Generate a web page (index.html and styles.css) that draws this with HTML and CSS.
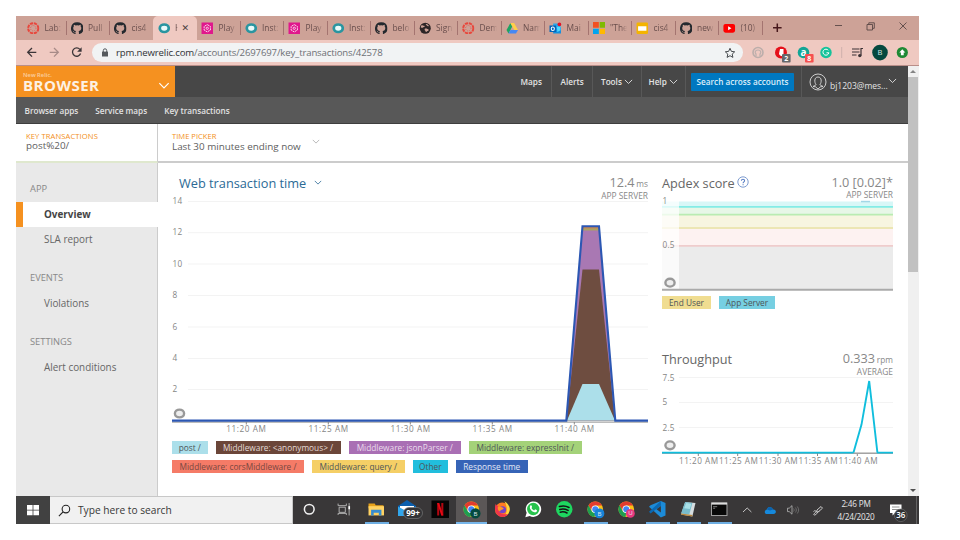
FILE: index.html
```
<!DOCTYPE html>
<html lang="en">
<head>
<meta charset="utf-8">
<title>Key transactions</title>
<link rel="stylesheet" href="styles.css">
</head>
<body>
<svg class="defs" aria-hidden="true">
  <symbol id="canvas" viewBox="0 0 12 12"><circle cx="6" cy="6" r="4.9" fill="none" stroke="#e8473c" stroke-width="1.9" stroke-dasharray="3.1 .75"/><circle cx="6" cy="6" r="2.6" fill="none" stroke="#e8473c" stroke-width=".8" stroke-dasharray=".8 1.24"/></symbol>
  <symbol id="github" viewBox="0 0 12 12"><path fill="#24292e" d="M6 .3a5.800 5.800 0 0 0-2 11.300c.3 0 .4-.1.4-.3v-1.200c-1.500.3-2-.4-2.200-.8-.2-.4-.5-.7-.8-.9.6-.1 1 .3 1.300.8.5.7 1.200.6 1.700.4 0-.4.2-.7.4-.9-1.600-.2-2.700-1-2.700-2.900 0-.7.200-1.200.6-1.600-.1-.4-.1-1 .1-1.600.6 0 1.200.4 1.600.7a6 6 0 0 1 3.200 0c.4-.3 1-.7 1.600-.7.200.6.2 1.200.1 1.600.4.4.6.9.6 1.600 0 1.900-1.100 2.700-2.700 2.900.3.2.4.6.4 1.100v1.500c0 .2.100.3.4.3A5.800 5.800 0 0 0 6 .3z"/></symbol>
  <symbol id="relic" viewBox="0 0 12 12"><ellipse cx="6" cy="6" rx="4.300" ry="3.600" fill="#e9fafa" stroke="#2a95a0" stroke-width="2.600"/></symbol>
  <symbol id="play" viewBox="0 0 12 12"><path fill="#e0178c" d="M.5.5h11v11H.5z"/><path d="M6 2.500 9 4.250v3.500L6 9.500 3 7.750v-3.500z" fill="none" stroke="#fff" stroke-width=".8" stroke-dasharray="2 .6"/><circle cx="6" cy="6" r="1.100" fill="none" stroke="#fff" stroke-width=".7"/></symbol>
  <symbol id="globe" viewBox="0 0 12 12"><circle cx="6" cy="6" r="5.300" fill="#2c2526"/><path d="M2 3.500c1.500-.8 2 .5 3.300.2.6.6-.3 1.500-1.300 1.300C3.500 6 2.500 5.600 1.700 5zM6.500 2c1.200-.3 2.600.7 3 1.800-1 .5-1.600.2-1.800-.5-.6-.1-1.200-.6-1.200-1.300zM5.700 6.300c1.500-.2 3 .3 3.700 1.400-.6 1-1.700 1.200-2.400 2C6 9.300 6.300 8 5.300 7.600z" fill="#cda297"/></symbol>
  <symbol id="drive" viewBox="0 0 12 12"><path fill="#1ea362" d="M4.200 1 .5 7.600 2.400 11 6 4.300z"/><path fill="#ffcf48" d="M4.200 1h3.600l3.700 6.600H8z"/><path fill="#4688f4" d="M2.400 11h7.200l1.900-3.400H4.300z"/></symbol>
  <symbol id="outlook" viewBox="0 0 12 12"><path fill="#28a8ea" d="M4 1.500h7v4H4z"/><path fill="#1490df" d="M4 5h7.500v6H4z"/><path fill="#50d9ff" d="M7.500 4.500H11V8L8 9.500z"/><path fill="#0364b8" d="M.5 3.300h6.300v6.200H.5z"/><ellipse cx="3.650" cy="6.400" rx="1.500" ry="1.700" fill="none" stroke="#fff"/><circle cx="10" cy="2.200" r="1.800" fill="#e81123"/></symbol>
  <symbol id="ms" viewBox="0 0 12 12"><path fill="#f25022" d="M0 0h5.600v5.600H0z"/><path fill="#7fba00" d="M6.400 0H12v5.600H6.400z"/><path fill="#00a4ef" d="M0 6.400h5.600V12H0z"/><path fill="#ffb900" d="M6.400 6.400H12V12H6.400z"/></symbol>
  <symbol id="slides" viewBox="0 0 12 12"><rect x=".5" y=".5" width="11" height="11" rx="1.200" fill="#f4b400"/><path fill="#fff" d="M2 4h8v4.300H2z"/></symbol>
  <symbol id="youtube" viewBox="0 0 12 12"><rect x=".4" y="1.900" width="11.200" height="8.300" rx="2" fill="#f00"/><path fill="#fff" d="m4.900 4 3.200 2-3.200 2z"/></symbol>
  <symbol id="chrome" viewBox="0 0 16 16"><circle cx="8" cy="8" r="7.600" fill="#fbc116"/><path fill="#e33b2e" d="M1.400 4.200A7.600 7.600 0 0 1 14.600 4.400H8L4.900 9.800z"/><path fill="#1e9e50" d="M1.400 4.200 4.700 9.900 8 11.500l-.8 4.100A7.600 7.600 0 0 1 1.400 4.200z"/><circle cx="8" cy="8" r="3.700" fill="#fff"/><circle cx="8" cy="8" r="2.900" fill="#4285f4"/></symbol>
  <symbol id="chev" viewBox="0 0 10 6"><path d="M1 1l4 4 4-4" fill="none" stroke="currentColor" stroke-width="1"/></symbol>
</svg>

<div class="desktop">
  <div class="tabstrip">
    <div class="tab"><svg><use href="#canvas"/></svg><span>Lab:</span></div>
    <div class="tab"><svg><use href="#github"/></svg><span>Pull</span></div>
    <div class="tab bare"><svg><use href="#github"/></svg><span>cis4</span></div>
    <div class="tab active"><svg><use href="#relic"/></svg><span class="short">H</span><i class="x">✕</i></div>
    <div class="tab"><svg><use href="#play"/></svg><span>Play</span></div>
    <div class="tab"><svg><use href="#relic"/></svg><span>Inst:</span></div>
    <div class="tab"><svg><use href="#play"/></svg><span>Play</span></div>
    <div class="tab"><svg><use href="#relic"/></svg><span>Inst:</span></div>
    <div class="tab"><svg><use href="#github"/></svg><span>belo</span></div>
    <div class="tab"><svg><use href="#globe"/></svg><span>Sign</span></div>
    <div class="tab"><svg><use href="#canvas"/></svg><span>Dem</span></div>
    <div class="tab"><svg><use href="#drive"/></svg><span>Nam</span></div>
    <div class="tab"><svg><use href="#outlook"/></svg><span>Mai</span></div>
    <div class="tab"><svg><use href="#ms"/></svg><span>"The</span></div>
    <div class="tab"><svg><use href="#slides"/></svg><span>cis4</span></div>
    <div class="tab"><svg><use href="#github"/></svg><span>new</span></div>
    <div class="tab"><svg><use href="#youtube"/></svg><span>(10)</span></div>
    <svg class="window-controls" viewBox="762 16 157 24">
      <path d="M777.300 23.500v8.600M773 27.800h8.600" stroke="#47181c" stroke-width="1.500"/>
      <g fill="none" stroke="#5a4746" stroke-width=".9"><path d="M835 25.500h7"/><path d="M867 24.500h5.500v5.500H867zM868.800 24.500v-1.700h5.500v5.500h-1.700M899.500 22.500l7 7M906.500 22.500l-7 7"/></g>
    </svg>
  </div>

  <div class="toolbar">
    <svg class="nav-icons" viewBox="16 40 92 25">
      <g fill="none" stroke="#3b3538" stroke-width="1.300"><path d="M36.300 52.300h-8.600m4.300-4.300-4.300 4.300 4.300 4.300"/><path stroke="#a78b88" d="M49.700 52.300h8.600m-4.300-4.300 4.300 4.300-4.300 4.300"/><path d="M79.900 49.300a4.200 4.200 0 1 0 .7 4.300"/></g><path fill="#3b3538" d="M81.600 47.300v4.500h-4.500z"/>
    </svg>
    <div class="omnibox">
      <svg class="lock" viewBox="0 0 8 9"><path fill="#55595d" d="M1 3.600h6v4.900H1z"/><path d="M2.300 4V2.500a1.700 1.700 0 0 1 3.400 0V4" fill="none" stroke="#55595d"/></svg>
      <span class="url"><b>rpm.newrelic.com</b>/accounts/2697697/key_transactions/42578</span>
      <svg class="star" viewBox="0 0 12 12"><path d="m6 1.300 1.400 3.100 3.300.4-2.500 2.300.7 3.300L6 8.700l-2.900 1.700.7-3.300L1.300 4.800l3.300-.4z" fill="none" stroke="#45494d" stroke-width="1"/></svg>
    </div>
    <svg class="extensions" viewBox="744 40 175 25">
      <g fill="none" stroke="#bcaeab"><circle cx="759" cy="52.500" r="5" stroke-width="1.600"/><path d="M757 56.500v-2.500c-1.500-1.500-1-4 2-4s3.500 2.500 2 4v2.500" stroke-width="1.200"/></g>
      <circle cx="782" cy="52.500" r="6" fill="#e5101a"/><path d="M781 49h3.500v7c-2 .8-4-.5-4.500-2.300z" fill="#fff"/><rect x="783" y="54" width="8.600" height="8.600" rx="1" fill="#66676a"/>
      <circle cx="804.500" cy="52.500" r="5.800" fill="#13a596"/><text x="804.500" y="55.700" fill="#fff" font-size="10" font-weight="700" text-anchor="middle">a</text><rect x="806" y="54" width="8.600" height="8.600" rx="1" fill="#f64f4f"/>
      <g fill="#fff" font-size="7" font-weight="700" text-anchor="middle"><text x="787.300" y="60.900">2</text><text x="810.300" y="60.900">8</text></g>
      <circle cx="827" cy="52.500" r="5.700" fill="#15c39a"/><path d="M829.300 50.300a3 3 0 1 0 .6 2.500h-2.400" fill="none" stroke="#fff" stroke-width="1"/>
      <path d="M842.700 47v11" stroke="#c7aaa6" stroke-width=".8"/>
      <path d="M853 49h7.500M853 52h7.500M853 55h4.500" stroke="#3c3336" stroke-width="1.200"/><path d="M862 55.500v-7h2" stroke="#3c3336" stroke-width="1.200" fill="none"/><circle cx="860.800" cy="55.600" r="1.700" fill="#3c3336"/>
      <circle cx="881" cy="52.600" r="7.800" fill="#05493f"/><text x="881" y="55.300" fill="#d7e7e4" font-size="7.500" text-anchor="middle">B</text>
      <circle cx="903.300" cy="52.500" r="5.600" fill="#1e8a35"/><path d="m903.300 49.300 3 3.300h-1.600v2.700h-2.800v-2.700h-1.600z" fill="#fff"/>
    </svg>
  </div>

  <div class="viewport">
    <div class="page">
      <header class="topbar">
        <div class="brand">
          <div class="brand-text"><small>New Relic.</small><strong>BROWSER</strong></div>
          <svg class="brand-chev"><use href="#chev"/></svg>
        </div>
        <nav class="topnav">
          <a class="n-maps">Maps</a><a class="n-alerts">Alerts</a>
          <a class="n-tools">Tools<svg><use href="#chev"/></svg></a>
          <a class="n-help">Help<svg><use href="#chev"/></svg></a>
          <div class="n-search"><button>Search across accounts</button></div>
          <div class="n-user"><svg class="avatar" viewBox="0 0 18 18"><g fill="none" stroke="#ddd" stroke-width=".9"><circle cx="9" cy="9" r="8"/><path d="M4 13.500c1-.9 3-1 3-2C5.300 9.500 5 4 9 4s3.700 5.500 2 7.500c0 1 2 1.100 3 2l-2.500.3L9 16l-2.500-2.200z"/></g></svg><span>bj1203@mes...</span><svg class="user-chev"><use href="#chev"/></svg></div>
        </nav>
      </header>
      <nav class="subnav"><a>Browser apps</a><a>Service maps</a><a>Key transactions</a></nav>
      <div class="context">
        <div class="crumb"><small>KEY TRANSACTIONS</small><span>post%20/</span></div>
        <div class="picker"><div><small>TIME PICKER</small><span>Last 30 minutes ending now</span></div><svg><use href="#chev"/></svg></div>
      </div>
      <div class="body">
        <aside class="sidebar">
          <h3>APP</h3><a class="current">Overview</a><a>SLA report</a>
          <h3>EVENTS</h3><a>Violations</a>
          <h3>SETTINGS</h3><a>Alert conditions</a>
        </aside>
        <main class="main">
          <section class="col-wide">
            <div class="chart-head"><h2 class="link">Web transaction time <svg><use href="#chev"/></svg></h2><div class="metric"><p>12.4 <small>ms</small></p><em>APP SERVER</em></div></div>
            <svg class="chart-main" viewBox="172 195 476 241">
              <path class="grid" d="M188 201.500h460M188 232.700h460M188 264h460M188 295.500h460M188 327h460M188 358.500h460M188 389.500h460"/>
              <g class="axis"><text x="172.500" y="204">14</text><text x="172.500" y="235.300">12</text><text x="172.500" y="266.700">10</text><text x="172.500" y="298">8</text><text x="172.500" y="329.500">6</text><text x="172.500" y="360.800">4</text><text x="172.500" y="392.300">2</text></g>
              <path fill="#a978b3" d="M566.500 420.500 582.500 226H599l16 194.500z"/>
              <path fill="#c78556" d="M582.500 227H599v2h-16.500z"/><path fill="#aaa262" d="M582.300 228.500h17l.1 2h-17.200z"/>
              <path fill="#6e4d40" d="M566.500 420.500 582.500 269.500H599l16 151z"/>
              <path fill="#acdfea" d="M567 420.500 582.500 384H599l16 36.500z"/>
              <path d="M172 422.200h476" stroke="#a6a6a6" stroke-width="1.200"/>
              <path d="M246.300 422v2.500M328.300 422v2.500M410.300 422v2.500M492.300 422v2.500M574.300 422v2.500" stroke="#888"/>
              <path d="M172 420.600h394.300L582.500 226.200H599l16.300 194.400H648" fill="none" stroke="#2c57b3" stroke-width="2.100"/>
              <ellipse class="ring" cx="179.500" cy="413.500" rx="4.600" ry="3.900"/>
              <g class="axis time"><text x="246" y="432" textLength="39.500">11:20 AM</text><text x="328.300" y="432" textLength="39.500">11:25 AM</text><text x="410.300" y="432" textLength="39.500">11:30 AM</text><text x="492.300" y="432" textLength="39.500">11:35 AM</text><text x="574.300" y="432" textLength="39.500">11:40 AM</text></g>
            </svg>
            <div class="legend">
              <span class="l-post w1">post /</span><span class="l-anon w2">Middleware: &lt;anonymous&gt; /</span><span class="l-json w3">Middleware: jsonParser /</span><span class="l-init w4">Middleware: expressInit /</span>
            </div>
            <div class="legend">
              <span class="l-cors w5">Middleware: corsMiddleware /</span><span class="l-query w6">Middleware: query /</span><span class="l-other w7">Other</span><span class="l-resp w8">Response time</span>
            </div>
          </section>
          <section class="col-side">
            <div class="chart-head"><h2>Apdex score <svg class="help" viewBox="0 0 12 12"><circle cx="6" cy="6" r="5.200" fill="#fff" stroke="#7e9cd0" stroke-width="1"/><path d="M4.400 4.800c0-2 3.200-2 3.200 0 0 1.100-1.500 1.100-1.500 2.400M6.100 8.200v1" fill="none" stroke="#5a7fc4" stroke-width="1.100"/></svg></h2><div class="metric"><p>1.0 [0.02]*</p><em>APP SERVER</em></div></div>
            <svg class="chart-apdex" viewBox="662 195 231 99">
              <path fill="#d8f7f7" d="M662 201.500h231v5H662z"/><path fill="#e7f7e7" d="M662 207h231v7.500H662z"/><path fill="#f7f5e0" d="M662 215h231v13H662z"/><path fill="#fdf2f1" d="M662 228h231v18H662z"/><path fill="#ebebeb" d="M662 246h231v43.500H662z"/>
              <path stroke="#83ece6" stroke-width="1.700" d="M662 206.800h231"/><path stroke="#b9ecb2" stroke-width="1.700" d="M662 214.700h231"/><path stroke="#ece6b4" stroke-width="1.900" d="M662 228h231"/><path stroke="#efcccc" stroke-width="1.800" d="M662 245.900h231"/>
              <path fill="#fff" fill-opacity=".72" d="M662 201h17v88.500h-17z"/>
              <path fill="#a3d7e6" d="M861 200.800h9v1.500h-9z"/><path d="M662 289.800h231" stroke="#aaa" stroke-width="1.900"/>
              <g class="axis"><text x="662.500" y="204.300">1</text><text x="662.500" y="248.300">0.5</text></g>
              <ellipse class="ring" cx="670" cy="282.700" rx="4.600" ry="3.900"/>
            </svg>
            <div class="legend compact"><span class="l-end w9">End User</span><span class="l-app w10">App Server</span></div>
            <div class="chart-head second"><h2>Throughput</h2><div class="metric"><p>0.333 <small>rpm</small></p><em>AVERAGE</em></div></div>
            <svg class="chart-thru" viewBox="662 371 231 98">
              <path class="grid" d="M679 377.500h214M679 402.500h214M679 427.500h214"/>
              <g class="axis"><text x="662.500" y="380.500">7.5</text><text x="662.500" y="405.300">5</text><text x="662.500" y="430.600">2.5</text></g>
              <path d="M662 453.300h231" stroke="#aaa" stroke-width="1.200"/><path d="M698.300 453v3M737.700 453v3M778 453v3M817.500 453v3M857.300 453v3" stroke="#888"/>
              <path d="M662 452.600h191.500l8-28 7.700-43.600 8.200 71.600H893" fill="none" stroke="#10bedd" stroke-width="1.900"/><path d="M853.500 453.300h23" stroke="#a3a3a3" stroke-width="1.400"/>
              <ellipse class="ring" cx="670" cy="445.300" rx="4.600" ry="3.900"/>
              <g class="axis time"><text x="698.500" y="463.700" textLength="39">11:20 AM</text><text x="738.400" y="463.700" textLength="39">11:25 AM</text><text x="778.200" y="463.700" textLength="39">11:30 AM</text><text x="818" y="463.700" textLength="39">11:35 AM</text><text x="858" y="463.700" textLength="39">11:40 AM</text></g>
            </svg>
          </section>
        </main>
      </div>
    </div>
    <div class="scrollbar"><i class="up"></i><b></b><i class="down"></i></div>
  </div>

  <footer class="taskbar">
    <div class="start"><svg viewBox="0 0 12 12"><path fill="#fff" d="M0 1h5.600v4.700H0zM6.400 1H12v4.700H6.400zM0 6.500h5.600v4.700H0zM6.400 6.500H12v4.700H6.400z"/></svg></div>
    <div class="search"><svg viewBox="0 0 12 12"><circle cx="7.300" cy="4.700" r="3.500" fill="none" stroke="#222"/><path d="M4.700 7.300.8 11.200" stroke="#222"/></svg><span>Type here to search</span></div>
    <div class="apps">
      <div class="wide"><svg viewBox="0 0 16 16"><circle cx="8" cy="8" r="4.700" fill="none" stroke="#f2f2f2" stroke-width="1.500"/></svg></div>
      <div class="wide"><svg viewBox="0 0 16 16"><path d="M3 2.500v2h8v-2M4 6h6v5H4zM3 13.500v-1.500h8v1.500M13.700 2v12" fill="none" stroke="#b9b9b9" stroke-width=".9"/><path d="M13 5h1.600v3H13z" fill="#fff"/></svg></div>
      <div class="wide open"><svg viewBox="0 0 16 16"><path fill="#e7a21a" d="M.5 2.500h6l1 1.500H15v3H.5z"/><path fill="#ffd262" d="M.5 5h15v9H.5z"/><path fill="#378ccf" d="M3 8.500h10V14h-2.500v-2.500h-5V14H3z"/></svg></div>
      <div class="mailcell"><svg class="mail" viewBox="0 0 26 20"><path fill="#0a5fae" d="M1 7l9-6 9 6v10H1z"/><path fill="#fff" d="M3 7h14v4l-7 3-7-3z"/><path fill="#31a6ec" d="M1 7.500l9 5 9-5V17H1z"/><rect x="6.500" y="8.500" width="19" height="11" rx="5.500" fill="#333436" stroke="#777" stroke-width=".7"/><text x="16" y="17" font-size="8" font-weight="700" fill="#fff" text-anchor="middle">99+</text></svg></div>
      <div><svg viewBox="0 0 16 16"><path fill="#050505" d="M-.5-.5h17v17h-17z"/><path fill="#b00710" d="M5 2h2v12H5zM9 2h2v12H9z"/><path fill="#e50914" d="M5 2h2l4 12H9z"/></svg></div>
      <div class="focus"><svg viewBox="0 0 16 16"><use href="#chrome"/><circle cx="12" cy="12" r="5" fill="#05493f"/><text class="dot" x="12" y="14.200">B</text></svg></div>
      <div><svg viewBox="0 0 16 16"><circle cx="8" cy="8.500" r="7" fill="#ff7c22"/><path fill="#ffd83c" d="M10 .3c4 2.200 6 5.700 5 9.500-.6 2.700-3 5-5.600 5.500C13 12 13.500 6 10 .3z"/><path fill="#f0354b" d="M1 7c0 5 3 8 7 8.500 2.500 0 5-1.500 5.700-3C9 14 3 12 4 4.500 3 5 1.700 3.600 2 2.500 1 4 1 5.500 1 7z"/><circle cx="8.300" cy="8.500" r="3.400" fill="#7542c9"/><path fill="#ff9825" d="M3.700 6C6 5 8 6 9.500 7c-1 2-3 1-3.500 3C4 9.500 3.300 7.500 3.700 6z"/></svg></div>
      <div><svg viewBox="0 0 16 16"><path fill="#fff" d="M.3 15.700 1.600 11.500A7.500 7.500 0 1 1 4.600 14.500z"/><circle cx="8" cy="7.800" r="6" fill="#27c24c"/><path fill="#fff" d="M5.200 4.300c.8-.5 1.300-.2 1.700 1.400L6.300 6.800c.6 1.200 1.500 1.900 2.600 2.300l.9-1c.8.200 1.500.6 1.900 1-.2 1.600-1.700 2.200-3.200 1.600C6.200 9.900 3.500 7 5.200 4.300z"/></svg></div>
      <div><svg viewBox="0 0 16 16"><circle cx="8" cy="8" r="8" fill="#1ed760"/><path d="M3.300 5.400c3-.9 6.600-.6 9.300.9M3.700 8.200c2.600-.8 5.600-.4 8 .9M4.100 10.800c2.300-.6 4.600-.3 6.600.8" fill="none" stroke="#151515" stroke-width="1.500" stroke-linecap="round"/></svg></div>
      <div class="open"><svg viewBox="0 0 16 16"><use href="#chrome"/><circle cx="12" cy="12" r="4.800" fill="#1683d8"/><text class="dot" x="12" y="14.200">B</text></svg></div>
      <div><svg viewBox="0 0 16 16"><use href="#chrome"/><circle cx="12" cy="12" r="4.300" fill="#e9377e"/><text class="dot" x="12" y="14">U</text></svg></div>
      <div class="open"><svg viewBox="0 0 16 16"><path fill="#1c8bd8" d="M11.500 0 16 2v12l-4.500 2L0 5.500 1.500 4z"/><path fill="#0a69b4" d="M0 10.500 11.500 0v4.500L1.500 12z"/><path fill="#3a3738" d="M11.500 4.800v6.400L7.300 8z"/></svg></div>
      <div class="open"><svg viewBox="0 0 16 16"><path fill="#d6dde0" d="m5 1 10 1-3 13-11-2z"/><path fill="#78bccc" d="m5 1 7 1-3 11-8-1z"/><path fill="#a9e1e8" d="m6 2 5 .7-1.500 5L4 7z"/><path fill="#b8863b" d="m1 12 11 1.500v1.500L1 13.300z"/></svg></div>
      <div class="open"><svg viewBox="0 0 16 16"><path fill="#080808" stroke="#9d9d9d" d="M.5 2h15v12H.5z"/><path fill="#ddd" d="M.5 1.500h15v2H.5z"/><path d="M2 5.500h4M2 7h2" stroke="#aaa" stroke-width=".7"/></svg></div>
    </div>
    <svg class="tray" viewBox="735 496 95 28">
      <path d="m743 512 4.200-4 4.200 4" fill="none" stroke="#c5c5c5"/>
      <path fill="#1689dc" d="M767 514c-3 0-3-4 0-4.500 1-3.500 5-3 6 0 3.500-.5 4 4.500.5 4.500z"/><path fill="#0c62ac" d="M767 509.500c1-3.500 5-3 6 0l-3 1z"/>
      <path d="M787.500 508.200h1.700l2.800-2.600v8.600l-2.800-2.600h-1.700z" fill="none" stroke="#b5b5b5" stroke-width=".8"/><path d="M793.500 508.500c.8 1 .8 2 0 3M795.300 507.500c1.400 1.600 1.400 3.400 0 5M797.300 506.500c1.800 2.400 1.800 4.600 0 7" fill="none" stroke="#777" stroke-width=".8"/>
      <path d="M813.500 511.500c2-2 3 0 2 1s-3 2-1 2.500 3-4 5-4M817 510l4-3.500 1.500 1.700-4 3.500-2 .4z" fill="none" stroke="#c9c9c9"/>
    </svg>
    <div class="clock"><span>2:46 PM</span><span>4/24/2020</span></div>
    <svg class="notice" viewBox="882 496 37 28"><path fill="#fff" d="M890 504.500h11.500v8.500H895l-2.500 2.500V513H890z"/><path d="M892 507h7.500M892 509.500h7.500" stroke="#777" stroke-width=".8"/><circle cx="900.800" cy="515.300" r="6.300" fill="#303133" stroke="#777" stroke-width=".6"/><text x="900.800" y="518.300" font-size="8" font-weight="600" fill="#fff" text-anchor="middle">36</text><path d="M916.500 496v28" stroke="#777" stroke-width=".7"/></svg>
  </footer>
</div>
</body>
</html>
```
FILE: styles.css
```
* { box-sizing: border-box; }
body { margin: 0; width: 960px; height: 540px; overflow: hidden; background: #fff; font-family: "Open Sans", "Noto Sans", sans-serif; color: #666; }
.defs { display: none; }
svg { display: block; flex: none; }
svg text { font-family: "Open Sans", sans-serif; }
h2, h3, p { margin: 0; font-weight: 400; }
.desktop { margin: 16px 0 0 16px; width: 903px; height: 508px; display: flex; flex-direction: column; overflow: hidden; }

.tabstrip { height: 24px; flex: none; display: flex; align-items: stretch; padding-left: 6.500px; background: #cda297; }
.tab { width: 43.500px; flex: none; display: flex; align-items: center; padding-left: 4.500px; position: relative; color: #694e4c; font: 8.400px/24px "Open Sans", sans-serif; }
.tab svg { width: 12.500px; height: 12.500px; margin-right: 5px; }
.tab span { width: 18px; overflow: hidden; white-space: nowrap; -webkit-mask-image: linear-gradient(90deg, #000 60%, transparent 95%); mask-image: linear-gradient(90deg, #000 60%, transparent 95%); }
.tab::after { content: ""; position: absolute; right: -.500px; top: 5px; width: 1px; height: 14px; background: #a47470; }
.tab.active { background: #efc9c1; border-radius: 5px 5px 0 0; }
.tab.active::after, .tab.bare::after { display: none; }
.tab .short { width: 3px; }
.x { font: 9px/24px "DejaVu Sans", sans-serif; color: #473d3e; margin-left: 3.500px; }
.window-controls { width: 157px; height: 24px; }

.toolbar { height: 26px; flex: none; display: flex; background: #efc9c1; border-bottom: 1px solid #b98e89; }
.nav-icons { width: 92px; height: 25px; margin-right: -16px; }
.omnibox { width: 651px; height: 19px; margin-top: 3px; border-radius: 10px; background: #f1f3f4; display: flex; align-items: center; padding: 0 7px 0 9px; color: #6d7074; font-size: 9.600px; }
.lock { width: 8px; height: 9px; margin-right: 7px; }
.url { flex: 1; letter-spacing: -.150px; }
.url b { font-weight: 400; color: #303236; }
.star { width: 12px; height: 12px; }
.extensions { width: 175px; height: 25px; }

.viewport { height: 430px; flex: none; display: flex; }
.page { width: 891.500px; flex: none; background: #fff; }
.topbar { height: 31px; background: #474747; display: flex; justify-content: space-between; }
.brand { width: 159px; background: #f59120; display: flex; justify-content: space-between; padding: 0 5px 0 7px; }
.brand-text { display: flex; flex-direction: column; color: #fff; }
.brand small { font-size: 5.800px; line-height: 8px; margin-top: 4.500px; font-weight: 600; color: #fbd0a0; }
.brand strong { font-size: 15px; line-height: 14px; margin-top: -1px; letter-spacing: .500px; font-weight: 700; color: #fdf1e4; }
.brand-chev { width: 12px; height: 7px; margin-top: 16px; color: #fff; }
.topnav { display: flex; color: #e4e4e4; font-size: 8.200px; font-weight: 600; line-height: 31px; }
.topnav > * { border-left: 1px solid #585858; display: flex; align-items: center; }
.topnav > .n-maps { border-left: 0; padding-left: 4px; width: 34px; }
.n-alerts { width: 41.500px; padding-left: 9px; }
.n-tools { width: 48.500px; padding-left: 8px; }
.n-help { width: 44.500px; padding-left: 7px; }
.n-tools svg, .n-help svg { width: 9px; height: 5.400px; margin: 1px 0 0 2px; }
.n-search { width: 116px; padding-left: 5px; }
.n-search button { width: 103px; height: 18px; border: 0; padding: 0; background: #0078c0; color: #dceefa; font: 600 8.200px/18px "Open Sans", sans-serif; border-radius: 1px; }
.n-user { width: 106.500px; padding-left: 7px; font-weight: 400; font-size: 8.500px; }
.avatar { width: 18px; height: 18px; margin: 0 3px 0 0; }
.n-user span { padding-top: 8px; line-height: 23px; }
.user-chev { width: 9px; height: 5.500px; margin: -2px 0 0 0; }
.subnav { height: 27px; background: #585858; border-bottom: 1px solid #3e3e3e; display: flex; gap: 17px; padding-left: 8.500px; color: #e2e2e2; font-size: 8.180px; font-weight: 600; line-height: 27px; }

.context { height: 39px; display: flex; }
.context small { display: block; color: #f38f22; font-size: 7.600px; line-height: 9px; }
.context span { display: block; font-size: 9.850px; line-height: 11px; color: #606060; }
.crumb { width: 142px; padding: 8px 0 0 10px; border-right: 1px solid #ccc; border-bottom: 2px solid #dfe8ce; }
.crumb small { letter-spacing: .100px; }
.crumb span { line-height: 9px; }
.picker { flex: 1; display: flex; padding: 8px 0 0 14px; border-bottom: 2px solid #ccc; }
.picker svg { width: 8px; height: 5px; margin: 7px 0 0 11px; color: #aaa; }

.body { height: 333px; display: flex; }
.sidebar { width: 142px; background: #e9e9e9; border-right: 1px solid #ccc; display: flex; flex-direction: column; padding-top: 13px; font-size: 9.900px; }
.sidebar h3 { font-size: 9.300px; line-height: 26px; height: 26px; padding-left: 14px; color: #888; }
.sidebar a { padding-left: 28px; line-height: 25px; height: 25px; color: #666; }
.sidebar a + h3 { margin-top: 13px; }
.sidebar .current { width: 142px; border-left: 7px solid #f59120; padding-left: 21px; background: #fff; color: #444; font-weight: 700; line-height: 25px; }
.main { flex: 1; display: flex; gap: 14px; padding: 12px 15px 0 14px; }
.col-wide { width: 476px; }
.col-side { width: 231px; }
.chart-head { display: flex; justify-content: space-between; height: 20px; }
.chart-head h2 { font-size: 12.700px; line-height: 16px; color: #666; display: flex; align-items: center; height: 15px; }
.chart-head h2.link { color: #2b6a95; padding-left: 7px; font-size: 12.750px; }
.link svg { width: 8px; height: 5px; margin-left: 8px; }
.help { width: 12px; height: 12px; margin: -2px 0 0 2px; }
.metric { text-align: right; height: 27px; position: relative; color: #888; }
.metric p { font-size: 12.700px; line-height: 15px; white-space: nowrap; }
.metric small { font-size: 8.300px; margin-left: -1.500px; }
.metric em { display: block; font-style: normal; font-size: 8.400px; line-height: 9px; }
.chart-main { width: 476px; height: 241px; }
.grid { stroke: #f3f3f3; fill: none; }
.axis { fill: #858585; font-size: 8.200px; letter-spacing: .200px; }
.axis.time { text-anchor: middle; letter-spacing: 0; }
.ring { fill: #eee; stroke: #999; stroke-width: 2.400px; }
.legend { display: flex; height: 13px; gap: 8px; margin: 5px 0 6px; }
.legend + .legend { margin-top: 0; }
.legend span { flex: none; font-size: 8.300px; line-height: 13px; text-align: center; white-space: nowrap; color: #4d5558; height: 13px; }
.w1 { width: 35.500px; } .w2 { width: 125px; } .w3 { width: 112.500px; } .w4 { width: 112.500px; }
.w5 { width: 132px; } .w6 { width: 92.500px; } .w7 { width: 35.500px; } .w8 { width: 71.500px; }
.w9 { width: 49px; } .w10 { width: 56px; }
.l-post { background: #acdfea; }
.legend .l-anon { background: #6b4639; color: #e3dad6; }
.legend .l-json { background: #a96fb4; color: #eadcec; }
.l-init { background: #a4d279; }
.legend .l-cors { background: #f57b67; color: #784740; }
.l-query { background: #f5cf66; }
.l-other { background: #21bedd; }
.legend .l-resp { background: #3664b7; color: #e2e9f5; }
.l-end { background: #f0dd91; }
.l-app { background: #76cfe2; }
.chart-apdex { width: 231px; height: 99px; }
.legend.compact { margin: 2px 0 42px; }
.chart-thru { width: 231px; height: 98px; }

.scrollbar { width: 11.500px; background: #f0f0f0; display: flex; flex-direction: column; align-items: center; }
.scrollbar b { width: 10px; height: 195px; background: #c1c1c1; margin-bottom: auto; }
.up, .down { border: 3px solid transparent; }
.up { border-top: 0; border-bottom-color: #858585; margin: 4px 0; }
.down { border-bottom: 0; border-top-color: #505050; margin-bottom: 4px; }

.taskbar { height: 28px; flex: none; display: flex; background: #393738; }
.start { width: 34px; background: #414141; display: flex; align-items: center; justify-content: center; }
.start svg { width: 12px; height: 12px; }
.search { width: 243px; background: #f1f1f1; display: flex; align-items: center; padding-left: 8px; font-size: 10.200px; color: #383838; border: 1px solid #c8c8c8; border-left: 0; }
.search svg { width: 13px; height: 13px; margin-right: 7px; }
.apps { width: 442px; display: flex; }
.apps div { width: 31px; display: flex; align-items: center; justify-content: center; border-bottom: 2px solid transparent; background-clip: padding-box; flex: none; }
.apps .wide { width: 33.500px; }
.apps .mailcell { width: 31.500px; padding-left: 3px; }
.apps svg { width: 16.500px; height: 16.500px; overflow: visible; margin-left: -1px; }
.apps svg.mail { width: 26px; height: 20px; }
.apps .open { background: linear-gradient(#6eaee2, #6eaee2) 50% 100% / 24px 2px no-repeat; border: 0; padding-bottom: 2px; }
.apps .focus { background: #5b5757; border-bottom: 2px solid #77b6ea; background-clip: border-box; }
.dot { font-size: 6px; fill: #dfeaf0; text-anchor: middle; }
.tray { width: 95px; height: 28px; }
.clock { width: 52px; display: flex; flex-direction: column; align-items: center; font-size: 8.200px; line-height: 13px; padding-top: 1px; color: #e8e8e8; letter-spacing: -.200px; }
.notice { width: 37px; height: 28px; }
```
